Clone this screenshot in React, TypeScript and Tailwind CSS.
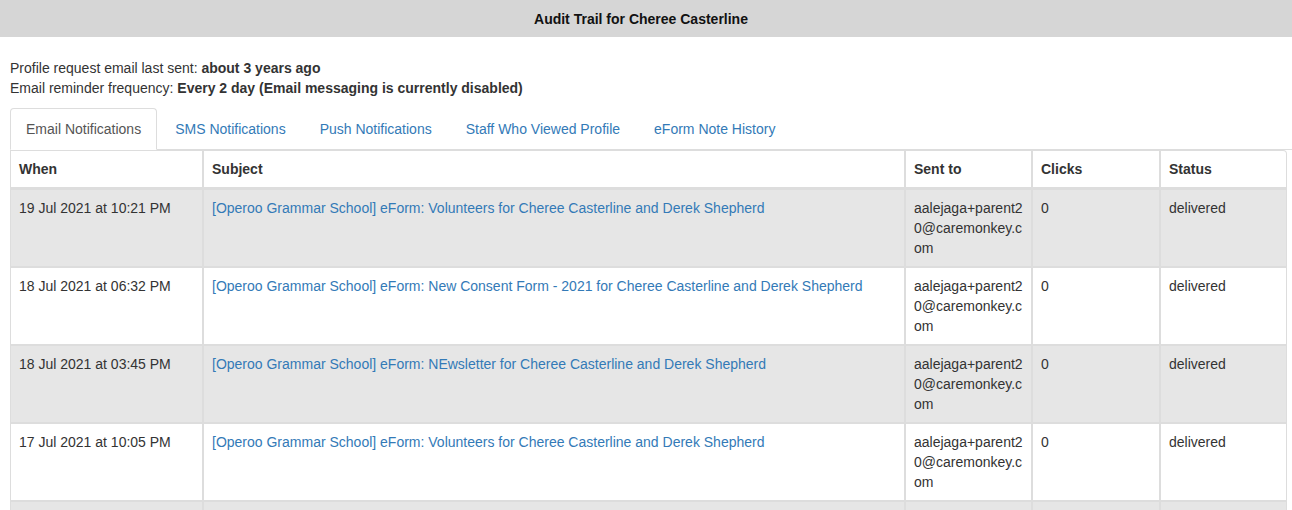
import React from "react";

const rows = [
  { when: "19 Jul 2021 at 10:21 PM", subject: "[Operoo Grammar School] eForm: Volunteers for Cheree Casterline and Derek Shepherd" },
  { when: "18 Jul 2021 at 06:32 PM", subject: "[Operoo Grammar School] eForm: New Consent Form - 2021 for Cheree Casterline and Derek Shepherd" },
  { when: "18 Jul 2021 at 03:45 PM", subject: "[Operoo Grammar School] eForm: NEwsletter for Cheree Casterline and Derek Shepherd" },
  { when: "17 Jul 2021 at 10:05 PM", subject: "[Operoo Grammar School] eForm: Volunteers for Cheree Casterline and Derek Shepherd" },
];

export default function App() {
  const tabs = ["Email Notifications", "SMS Notifications", "Push Notifications", "Staff Who Viewed Profile", "eForm Note History"];
  return (
    <div className="w-[1292px] h-[510px] overflow-hidden bg-white text-[14px] leading-[20px] text-[#333]" style={{ fontFamily: '"Liberation Sans", Arial, sans-serif' }}>
      <div className="h-[37px] bg-[#d6d6d6] flex items-center justify-center pr-[10px] font-bold text-[#111]">
        Audit Trail for Cheree Casterline
      </div>
      <div className="pl-[10px] pt-[21px]">
        <div>Profile request email last sent: <b>about 3 years ago</b></div>
        <div>Email reminder frequency: <b>Every 2 day (Email messaging is currently disabled)</b></div>
        <div className="mt-[10px] flex border-b border-[#ddd]">
          {tabs.map((t, i) => (
            <div
              key={t}
              className={
                i === 0
                  ? "mr-[2px] -mb-px px-[15px] py-[10px] border border-[#ddd] border-b-transparent rounded-t-[4px] bg-white text-[#555]"
                  : "mr-[2px] -mb-px px-[15px] py-[10px] border border-transparent text-[#337ab7]"
              }
            >
              {t}
            </div>
          ))}
        </div>
        <table className="w-[1277px] border-separate border-spacing-0 table-fixed rounded-tr-[4px]">
          <colgroup>
            <col className="w-[193px]" />
            <col className="w-[702px]" />
            <col className="w-[127px]" />
            <col className="w-[128px]" />
            <col className="w-[127px]" />
          </colgroup>
          <thead>
            <tr>
              {["When", "Subject", "Sent to", "Clicks", "Status"].map((h, i) => (
                <th
                  key={h}
                  className={
                    "text-left font-bold align-bottom p-[8px] border border-[#ddd] border-b-2 " +
                    (i === 4 ? "rounded-tr-[4px]" : "")
                  }
                >
                  {h}
                </th>
              ))}
            </tr>
          </thead>
          <tbody>
            {rows.map((r, idx) => (
              <tr key={idx} className={idx % 2 === 0 ? "bg-[#e6e6e6]" : "bg-white"}>
                <td className="align-top p-[8px] border border-[#ddd]">{r.when}</td>
                <td className="align-top p-[8px] border border-[#ddd] text-[#337ab7]">{r.subject}</td>
                <td className="align-top p-[8px] border border-[#ddd] break-all">aalejaga+parent20@caremonkey.com</td>
                <td className="align-top p-[8px] border border-[#ddd]">0</td>
                <td className="align-top p-[8px] border border-[#ddd]">delivered</td>
              </tr>
            ))}
            <tr className="bg-[#e6e6e6]">
              <td className="h-[78px] border border-[#ddd]"></td>
              <td className="h-[78px] border border-[#ddd]"></td>
              <td className="h-[78px] border border-[#ddd]"></td>
              <td className="h-[78px] border border-[#ddd]"></td>
              <td className="h-[78px] border border-[#ddd]"></td>
            </tr>
          </tbody>
        </table>
      </div>
    </div>
  );
}
